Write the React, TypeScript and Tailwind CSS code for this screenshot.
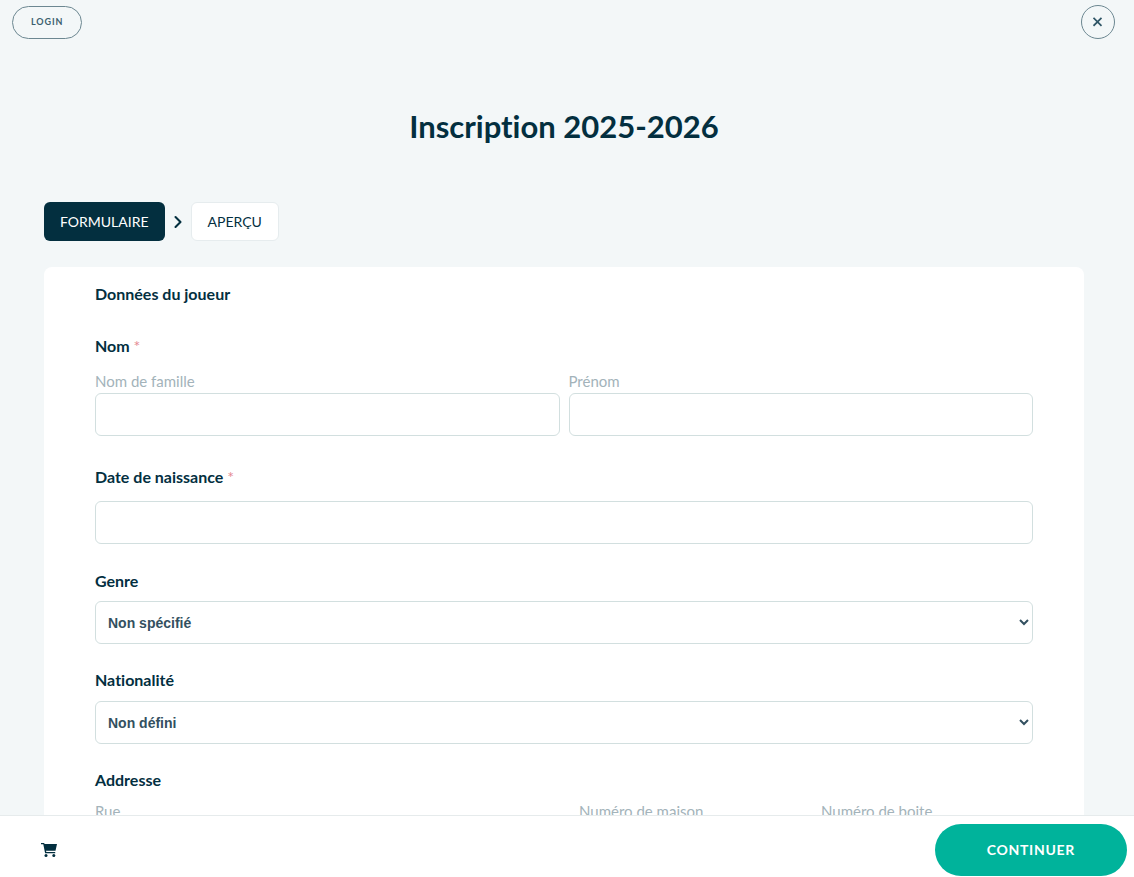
import { ChevronRight } from 'lucide-react';
import type { ReactNode } from 'react';

const inputClass = 'block h-[43px] w-full rounded-md border border-[#d2dfdf] bg-white px-3 text-sm text-[#3b5565] outline-none focus:border-[#00b39b]';
const selectClass = 'block h-[43px] w-full rounded-md border border-[#d2dfdf] bg-white px-2 font-["Liberation_Sans"] text-sm font-bold text-[#335060] outline-none';
const titleClass = 'block text-base leading-5 font-bold text-[#032f3f]';

function Required() {
  return <span className="font-normal text-[#e58a92]">*</span>;
}

interface FieldProps {
  id: string;
  label: string;
  children?: ReactNode;
}

function SubField({ id, label, children }: FieldProps) {
  return (
    <div>
      <label htmlFor={id} className="block pb-1 text-[15px] leading-4 text-[#a3b3ba]">{label}</label>
      {children ?? <input id={id} type="text" className={inputClass} />}
    </div>
  );
}

export default function App() {
  return (
    <div className="flex h-screen flex-col bg-[#f3f7f8] font-[Lato,sans-serif] text-[#032f3f] [font-variant-ligatures:none]">
      <div className="min-h-0 flex-1 overflow-y-auto [scrollbar-width:none]">
        <header className="flex items-center justify-between pt-[5px] pr-[19px] pl-3">
          <button type="button" className="h-[33px] rounded-full border border-[#6c8791] px-[18px] text-[9px] font-bold tracking-widest text-[#3b5f6e]">
            LOGIN
          </button>
          <button type="button" aria-label="Fermer" className="flex size-[34px] items-center justify-center rounded-full border border-[#6c8791] text-[#2f5566]">
            <svg viewBox="0 0 10 10" className="size-[10px]" fill="none" stroke="currentColor" strokeWidth="1.7">
              <path d="M.5.8l8 8M8.5.8l-8 8" />
            </svg>
          </button>
        </header>

        <main className="pt-[67px] pr-[50px] pb-8 pl-11">
          <h1 className="text-center text-[31px] leading-10 font-bold">Inscription 2025-2026</h1>

          <nav className="mt-14 flex items-center">
            <button type="button" className="h-[39px] rounded-md bg-[#032f3f] px-4 text-sm text-white">
              FORMULAIRE
            </button>
            <ChevronRight className="mx-[3px] size-5" strokeWidth={2.5} />
            <button type="button" className="h-[39px] rounded-md border border-[#e6ecee] bg-white px-4 text-sm">
              APERÇU
            </button>
          </nav>

          <form className="mt-[26px] rounded-lg bg-white px-[51px] pt-[17px] pb-12">
            <h2 className={titleClass}>Données du joueur</h2>

            <fieldset className="mt-8">
              <legend className={titleClass}>Nom <Required /></legend>
              <div className="mt-[17px] grid grid-cols-2 gap-[9px]">
                <SubField id="lastname" label="Nom de famille" />
                <SubField id="firstname" label="Prénom" />
              </div>
            </fieldset>

            <div className="mt-[31px]">
              <label htmlFor="birthdate" className={titleClass}>Date de naissance <Required /></label>
              <input id="birthdate" type="text" className={`${inputClass} mt-[14px]`} />
            </div>

            <div className="mt-[27px]">
              <label htmlFor="gender" className={titleClass}>Genre</label>
              <select id="gender" className={`${selectClass} mt-[10px]`}>
                <option>Non spécifié</option>
                <option>Homme</option>
                <option>Femme</option>
              </select>
            </div>

            <div className="mt-[26px]">
              <label htmlFor="nationality" className={titleClass}>Nationalité</label>
              <select id="nationality" className={`${selectClass} mt-[11px]`}>
                <option>Non défini</option>
                <option>Belgique</option>
                <option>France</option>
              </select>
            </div>

            <fieldset className="mt-[26px]">
              <legend className={titleClass}>Addresse</legend>
              <div className="mt-[13px] grid grid-cols-[454fr_212fr_212fr] gap-[30px]">
                <SubField id="street" label="Rue" />
                <SubField id="number" label="Numéro de maison" />
                <SubField id="box" label="Numéro de boite" />
              </div>
            </fieldset>
          </form>
        </main>
      </div>

      <footer className="flex items-center justify-between border-t border-[#e6ebec] bg-white pt-2 pr-[7px] pb-px pl-10">
        <button type="button" aria-label="Panier" className="text-[#032f3f]">
          <svg viewBox="0 0 18 16" className="h-4 w-[18px]" fill="currentColor">
            <path d="M1 1h3.2l.3 1H17l-1.5 6.8H6l.3 1.2h8.9v1.2H5.1L3.3 2.3H1z" />
            <circle cx="6" cy="13.5" r="1.5" />
            <circle cx="13.8" cy="13.5" r="1.5" />
          </svg>
        </button>
        <button type="submit" className="h-[52px] rounded-full bg-[#00b39b] px-[52px] text-sm font-bold tracking-wider text-white">
          CONTINUER
        </button>
      </footer>
    </div>
  );
}
